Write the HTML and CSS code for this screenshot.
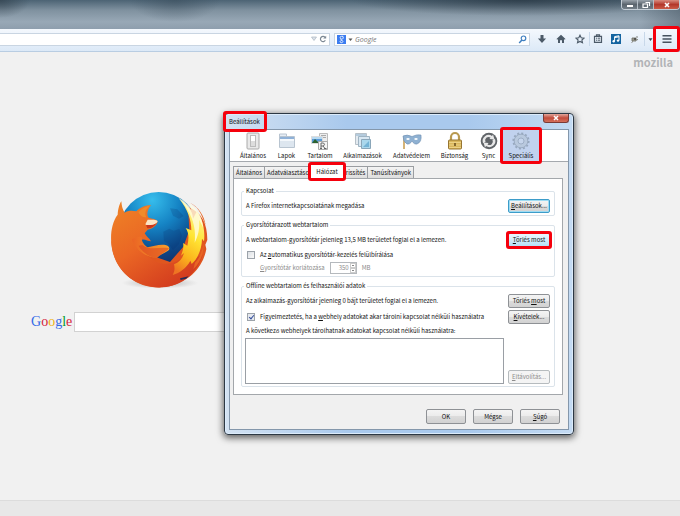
FILE: index.html
```html
<!DOCTYPE html>
<html lang="hu">
<head>
<meta charset="utf-8">
<title>Beállítások</title>
<link rel="stylesheet" href="styles.css">
</head>
<body>
<header class="glass">
  <div class="caption">
    <button class="cap" aria-label="Kis méret"><svg viewBox="0 0 10 8"><path d="M2 4h6v2H2z" fill="#fff"/></svg></button>
    <button class="cap" aria-label="Előző méret"><svg viewBox="0 0 10 8"><path d="M4.500 1.500h4v3.500M2 3h4.500v3.500H2z" fill="none" stroke="#fff" stroke-width="1.200"/></svg></button>
    <button class="cap cap-close" aria-label="Bezárás"><svg viewBox="0 0 10 8"><path d="M3 2l4 4M7 2L3 6" stroke="#fff" stroke-width="1.600"/></svg></button>
  </div>
</header>
<nav class="navbar">
  <div class="field url">
    <input aria-label="Cím" type="text">
    <svg class="i-drop" viewBox="0 0 8 8"><path d="M1.500 2h5L4 5.500z" fill="#dde3ea" stroke="#a9b4c0" stroke-width=".7"/></svg>
    <svg class="i-reload" viewBox="0 0 8 8"><path d="M6 2.300A2.600 2.600 0 1 0 6.300 5.300" fill="none" stroke="#7c8894" stroke-width="1.200"/><path d="M4.200 3.600h3V.7z" fill="#7c8894"/></svg>
  </div>
  <div class="field search">
    <svg class="i-g" viewBox="0 0 9 9"><path d="M0 0h9v9H0z" fill="#3b7cf0"/><path d="M6.400 1.300H4.500a1.300 1.300 0 1 0 0 2.700 1.300 1.300 0 0 0 .9-2.500M4.200 4c-.8.600.2 1 1 1.400 1.200.700.800 2.300-.8 2.300s-2-1.900.3-2.300" fill="none" stroke="#fff" stroke-width=".8"/></svg>
    <svg class="i-caret" viewBox="0 0 5 5"><path d="M.500 1.500h4L2.500 4z" fill="#555"/></svg>
    <input type="text" aria-label="Keresés" placeholder="Google">
    <svg class="i-find" viewBox="0 0 9 9"><circle cx="5.500" cy="3.300" r="2.300" fill="none" stroke="#3f7fc0" stroke-width="1.200"/><path d="M3.900 5L1.200 7.900" stroke="#3f7fc0" stroke-width="1.500"/></svg>
  </div>
  <div class="tools">
    <button class="tool" aria-label="Letöltések"><svg viewBox="0 0 10 10"><path d="M3.500 1h3v3.500h2.600L5 9 .9 4.500h2.600z" fill="#4c5a68"/></svg></button>
    <button class="tool" aria-label="Kezdőlap"><svg viewBox="0 0 10 10"><path d="M5 .8L9.500 5l-.7.700L8 5v4H6V6.200H4V9H2V5l-.8.700L.500 5z" fill="#4c5a68"/></svg></button>
    <button class="tool" aria-label="Könyvjelző"><svg viewBox="0 0 10 10"><path d="M5 1.200l1.200 2.600 2.800.300-2.100 1.900.600 2.800L5 7.400 2.500 8.800l.600-2.800L1 4.100l2.800-.3z" fill="none" stroke="#4c5a68" stroke-width="1.100"/></svg></button>
    <button class="tool tool-list" aria-label="Könyvjelzők"><svg viewBox="0 0 10 10"><path d="M3.500 2V.800h3V2M1.500 2.300h7v6h-7z" fill="none" stroke="#4c5a68" stroke-width="1.200"/><path d="M3 4.200h1m.7 0h2.500M3 6.200h1m.7 0h2.500" stroke="#4c5a68"/></svg></button>
    <button class="tool" aria-label="Zene"><svg viewBox="0 0 10 10"><path d="M0 0h10v10H0z" fill="#1464a0"/><path d="M3.600 7.200V2.600L8 1.800v4.600M3.600 3.600L8 2.800" fill="none" stroke="#fff"/><circle cx="2.700" cy="7.300" r="1.200" fill="#fff"/><circle cx="7" cy="6.600" r="1.200" fill="#fff"/></svg></button>
    <button class="tool" aria-label="Bővítmény"><svg viewBox="0 0 10 10"><path d="M2 4h4v3H2zM6 3h2M3 7.500L1.500 8.500M6 6l2-.5" fill="#9a9a90" stroke="#77776e" stroke-width=".9"/><path d="M4 4.500h2v1H4z" fill="#222"/></svg></button>
    <button class="tool tool-more" aria-label="Továbbiak"><svg viewBox="0 0 5 5"><path d="M.500 1.200h4L2.500 4z" fill="#3c4650"/></svg></button>
    <button class="tool menu mark" aria-label="Menü"><svg viewBox="0 0 10 10"><path d="M.500 1.800h9M.500 5h9M.500 8.200h9" stroke="#46525f" stroke-width="1.600"/></svg></button>
  </div>
</nav>
<main class="page">
  <a class="mozilla" href="#">mozilla</a>
  <svg class="fox" viewBox="0 0 360 360" role="img" aria-label="Firefox">
    <defs>
      <radialGradient id="globe" cx=".42" cy=".1" r=".85"><stop offset="0" stop-color="#36bdec"/><stop offset=".4" stop-color="#1583c4"/><stop offset=".75" stop-color="#0c4a8c"/><stop offset="1" stop-color="#123068"/></radialGradient>
      <linearGradient id="fur" x1="0" y1="0" x2=".7" y2="1"><stop offset="0" stop-color="#ef8426"/><stop offset=".5" stop-color="#ea6624"/><stop offset="1" stop-color="#d23a1e"/></linearGradient>
      <linearGradient id="tail" x1=".6" y1="0" x2=".3" y2="1"><stop offset="0" stop-color="#fff7b0"/><stop offset=".45" stop-color="#ffe433"/><stop offset=".75" stop-color="#fbb41c"/><stop offset="1" stop-color="#ee7423"/></linearGradient>
      <linearGradient id="arm" x1="0" x2="1"><stop offset="0" stop-color="#ea6424"/><stop offset="1" stop-color="#f9a02b"/></linearGradient>
      <radialGradient id="shade"><stop offset="0" stop-color="#777" stop-opacity=".6"/><stop offset="1" stop-color="#999" stop-opacity="0"/></radialGradient>
    </defs>
    <ellipse cx="180" cy="309" rx="115" ry="17" fill="url(#shade)"/>
    <circle cx="176" cy="155" r="119" fill="url(#globe)"/>
    <path d="M190 155l18-9 13 6 17-5 8 20-10 26-17 17-13-18-14-9zM210 85l22 3 19 20-14 8-18-9z" fill="#092e67" opacity=".2"/>
    <path d="M264 80C306 98 322 130 322 180L316 194 319 207C310 260 268 305 208 319 110 338 38 270 34 184L210 246 250 200 268 150z" fill="#e0561f"/>
    <path d="M64 64C58 72 54 88 53 104 36 126 31 159 34 192 42 275 110 326 188 322 247 318 293 277 308 225L282 233 240 238C220 253 183 257 157 239 132 222 121 200 126 179 134 176 144 184 153 184 148 174 138 169 134 160L143 149C156 147 170 136 173 125 170 116 155 116 146 113 138 103 143 88 153 75 137 76 119 82 109 94 96 91 82 92 74 98 67 88 65 76 64 64z" fill="url(#fur)"/>
    <path d="M236 54C260 74 279 91 279 116L291 93C308 118 316 151 312 184L306 176C306 205 293 237 275 252L271 242C259 264 240 278 218 285 225 272 224 263 222 253 237 248 247 237 252 219L243 227C249 211 252 199 249 189L262 197C267 176 267 158 257 144L274 151C274 121 265 91 236 54z" fill="url(#tail)"/>
    <path d="M236 54C254 64 267 75 274 91L269 71C292 88 306 109 310 143L297 119C300 145 294 169 284 188 288 153 281 119 264 92 258 78 247 64 236 54z" fill="#fffce0" opacity=".8"/>
    <path d="M270 68C295 79 313 108 317 135L303 103C297 88 286 77 270 68zM311 190C312 220 301 247 280 268L285 248C299 234 307 214 311 190z" fill="#e86623"/>
    <path d="M96 178C105 172 116 168 126 171 123 182 131 195 143 202 161 199 181 191 199 196 207 198 212 207 204 212 194 218 181 224 170 234 148 233 119 218 109 201 102 194 97 187 96 178z" fill="url(#arm)"/>
    <path d="M127 195C151 214 180 199 207 205 203 213 187 219 171 234 151 234 125 215 116 197z" fill="#d94420" opacity=".55"/>
    <path d="M143 119C154 120 164 117 173 123 171 132 157 137 144 139L136 133z" fill="#fbe4c5"/>
    <path d="M138 135C150 136 163 135 170 129 163 140 152 146 142 145z" fill="#c9351e"/>
    <path d="M139 112C132 100 138 86 152 76 139 79 124 86 115 97 121 107 127 113 139 112z" fill="#f08b28"/>
    <path d="M240 295l26-6-8 7-16 4z" fill="#232c57"/>
  </svg>
  <form class="gform">
    <label class="google" for="q"><span class="b">G</span><span class="r">o</span><span class="y">o</span><span class="b">g</span><span class="g">l</span><span class="r">e</span></label>
    <input id="q" type="text">
  </form>
</main>
<footer class="pagefoot"></footer>

<section class="dialog" role="dialog" aria-labelledby="dt">
  <div class="titlebar">
    <h1 id="dt" class="mark">Beállítások</h1>
    <button class="dclose" aria-label="Bezárás"><svg viewBox="0 0 10 8"><path d="M3 2l4 4M7 2L3 6" stroke="#fff" stroke-width="1.500"/></svg></button>
  </div>
  <div class="client">
    <div class="cats">
      <button class="cat"><svg viewBox="0 0 20 20"><rect x="4" y="2" width="12" height="16" rx="1" fill="#e9e9e9" stroke="#aaa"/><rect x="7.500" y="4.500" width="5" height="11" fill="#fff" stroke="#bbb"/><path d="M8 10h4v5H8z" fill="#ddd"/></svg>Általános</button>
      <button class="cat"><svg viewBox="0 0 20 20"><path d="M2.500 6V3h7v3" fill="#e6edf5" stroke="#b8c4d0"/><path d="M2.500 5.500h15v11h-15z" fill="#dde6ef" stroke="#b8c4d0"/><path d="M3 6h14v2H3z" fill="#8fb1d8"/><path d="M3 8h14v2H3z" fill="#f3f7fb"/></svg>Lapok</button>
      <button class="cat"><svg viewBox="0 0 20 20"><path d="M9.500 2.500h8v9h-8z" fill="#eee" stroke="#bbb"/><path d="M11 4.500h5M11 6.500h5" stroke="#aaa"/><path d="M1.500 5.500h11v7h-11z" fill="#5a9bd8" stroke="#ddd"/><path d="M2 12l3-4 3 3 2-1 2 2z" fill="#2c6330"/><path d="M2 6h10v2H2z" fill="#b8daf2"/><path d="M8.500 10.500h9v8h-9z" fill="#f5f5f5" stroke="#aaa"/><path d="M10 17.500h2m2 0h2.500M11 17v-5h2.500q2 1 0 3H11m2 0l2 2.500" fill="none" stroke="#666"/></svg>Tartalom</button>
      <button class="cat"><svg viewBox="0 0 20 20"><path d="M2.500 2.500h11v11h-11z" fill="#e3eaf0" stroke="#b6c0c8"/><path d="M3 3h10v2H3z" fill="#b4cbdd"/><path d="M5.500 5.500h11v10h-11z" fill="#d8e7f2" stroke="#9fb4c3"/><path d="M8.500 8.500h9v9h-9z" fill="#aad7ec" stroke="#8aa6b9"/><path d="M10 16l6-6v6z" fill="#74b3d5"/></svg>Alkalmazások</button>
      <button class="cat"><svg viewBox="0 0 20 20"><path d="M2 5v13" stroke="#c69a4a" stroke-width="1.500"/><path d="M1 5Q5 3 10 5.500 15 3 19 4q1 7-4 9-3 1-5-3-2 4-5 3-4-2-4-8z" fill="#8fb1d2" stroke="#6f8fb2" stroke-width=".6"/><path d="M4 8q2-2 4 0-2 2-4 0zM12 8q2-2 4 0-2 2-4 0z" fill="#fff"/></svg>Adatvédelem</button>
      <button class="cat"><svg viewBox="0 0 20 20"><path d="M6 10V6a4 4 0 0 1 8 0v4" fill="none" stroke="#b99a50" stroke-width="2.200"/><rect x="3.500" y="9" width="13" height="9" rx="1" fill="#d9b65c" stroke="#967531"/><path d="M4 11.500h12M4 14h12M4 16.500h12" stroke="#f1d991" stroke-width=".8"/><path d="M9.200 12h1.600v3H9.200z" fill="#6d5221"/></svg>Biztonság</button>
      <button class="cat"><svg viewBox="0 0 20 20"><circle cx="10" cy="10" r="8.300" fill="#606468"/><path d="M4 12a6 6 0 0 1 9-7l1-1.500 1.500 5-5-.5 1-1.500a3.500 3.500 0 0 0-5 4.500zM16 8a6 6 0 0 1-9 7l-1 1.500-1.500-5 5 .5-1 1.500A3.500 3.500 0 0 0 13.500 9z" fill="#e8e8e8"/></svg>Sync</button>
      <button class="cat cat-on mark"><svg viewBox="0 0 20 20"><circle cx="10" cy="10" r="7.600" fill="none" stroke="#97a8be" stroke-width="2" stroke-dasharray="2 1.979"/><circle cx="10" cy="10" r="5" fill="none" stroke="#b9c9de" stroke-width="4"/><circle cx="10" cy="10" r="6.800" fill="none" stroke="#8fa1b8" stroke-width=".7"/><circle cx="10" cy="10" r="3" fill="#c6d5ec" stroke="#8fa1b8" stroke-width=".7"/></svg>Speciális</button>
    </div>
    <div class="tabs">
      <button class="tab">Általános</button><button class="tab">Adatválasztások</button><button class="tab tab-on mark">Hálózat</button><button class="tab">Frissítés</button><button class="tab">Tanúsítványok</button>
    </div>
    <div class="panel">
      <fieldset>
        <legend>Kapcsolat</legend>
        <div class="row"><p>A Firefox internetkapcsolatának megadása</p><button class="btn focus"><u>B</u>eállítások...</button></div>
      </fieldset>
      <fieldset>
        <legend>Gyorsítótárazott webtartalom</legend>
        <div class="row"><p>A webtartalom-gyorsítótár jelenleg 13,5 MB területet foglal el a lemezen.</p><button class="btn hot mark"><u>T</u>örlés most</button></div>
        <div class="check"><input type="checkbox" id="c1"><label for="c1">Az <u>a</u>utomatikus gyorsítótár-kezelés felülbírálása</label></div>
        <div class="limit"><label for="n"><u>G</u>yorsítótár korlátozása</label><span class="spin"><input id="n" type="text" value="350" disabled><span class="arrows"><i></i><i></i></span></span><span>MB</span></div>
      </fieldset>
      <fieldset>
        <legend>Offline webtartalom és felhasználói adatok</legend>
        <div class="row"><p>Az alkalmazás-gyorsítótár jelenleg 0 bájt területet foglal el a lemezen.</p><button class="btn">Törlés <u>m</u>ost</button></div>
        <div class="row row-2"><div class="check"><input type="checkbox" id="c2" checked><label for="c2">Figyelmeztetés, ha a <u>w</u>ebhely adatokat akar tárolni kapcsolat nélküli használatra</label></div><button class="btn"><u>K</u>ivételek...</button></div>
        <p class="listlabel">A következő webhelyek tárolhatnak adatokat kapcsolat nélküli használatra:</p>
        <div class="row row-list"><div class="list" role="listbox" aria-label="Webhelyek"></div><button class="btn" disabled><u>E</u>ltávolítás...</button></div>
      </fieldset>
    </div>
    <div class="actions"><button class="btn">OK</button><button class="btn">Mégse</button><button class="btn"><u>S</u>úgó</button></div>
  </div>
</section>
</body>
</html>
```
FILE: styles.css
```css
* { box-sizing: border-box; }
body {
  margin: 0;
  min-height: 100vh;
  display: flex;
  flex-direction: column;
  background: #f1f1f1;
  color: #111;
  font: 6px/10px "Noto Sans CJK JP", "Open Sans", sans-serif;
}
button, input { font: inherit; color: inherit; margin: 0; padding: 0; }
button { background: none; border: 0; white-space: nowrap; }
svg { display: block; flex: none; }
p, h1 { margin: 0; font: inherit; white-space: nowrap; }
u { text-underline-offset: 1px; }

/* red callout around an element */
.mark { position: relative; }
.mark::after {
  content: "";
  position: absolute;
  z-index: 2;
  inset: -3px;
  border: 3px solid #f5000c;
  border-radius: 3px;
  pointer-events: none;
}

.glass {
  height: 29px;
  display: flex;
  justify-content: flex-end;
  align-items: flex-start;
  background:
    radial-gradient(ellipse 30px 18px at 0 0, #2e3d49aa, transparent),
    radial-gradient(ellipse 45px 22px at 175px 0, #384b5a88, transparent),
    radial-gradient(ellipse 170px 16px at 520px 0, #202d38aa, transparent),
    linear-gradient(90deg, transparent 94%, #38465266),
    linear-gradient(#4c6374, #7f919f 35%, #98a8b6 75%, #8e9ead);
}
.caption {
  display: flex;
  height: 10px;
  border: 1px solid #c3ccd4;
  border-top: 0;
  border-radius: 0 0 4px 4px;
  overflow: hidden;
}
.cap { width: 16px; background: linear-gradient(#9aa3ab, #5b656e 50%, #737e87); border-right: 1px solid #b5bec6; }
.cap svg { width: 12px; height: 8px; margin: auto; }
.cap-close { width: 25px; border: 0; background: linear-gradient(#d98c7f, #b3382b 50%, #cb5c48); }

.navbar {
  display: flex;
  align-items: center;
  gap: 4px;
  height: 23px;
  padding-bottom: 2px;
  background: linear-gradient(#f4f8fd, #dce9f7);
  border-bottom: 1px solid #b9cde2;
}
.field {
  display: flex;
  align-items: center;
  height: 13px;
  background: #fff;
  border: 1px solid #c9d5e2;
}
.field input { border: 0; background: none; min-width: 0; flex: 1; outline: 0; height: 11px; }
.url { flex: 1; border-left: 0; padding-right: 2px; gap: 1px; }
.search { width: 196px; padding: 0 2px; gap: 2px; }
.search input { font-style: italic; font-size: 7px; font-family: "Open Sans", sans-serif; }
.search input::placeholder { color: #777; opacity: 1; }
.i-drop, .i-reload { width: 8px; height: 8px; }
.i-g, .i-find { width: 9px; height: 9px; }
.i-caret { width: 5px; height: 5px; }
.tools { display: flex; align-items: center; height: 20px; margin-left: -2px; }
.tool { width: 19px; height: 14px; display: grid; place-items: center; }
.tool svg { width: 10px; height: 10px; }
.tool-list, .tool-more { border-left: 1px solid #c8d8e9; }
.tool-list { width: 17px; }
.tool-more { width: 11px; }
.tool-more svg { width: 5px; height: 5px; }
.menu { width: 21px; height: 20px; margin: 0 3px 0 1px; }

.page { flex: 1; display: flex; flex-direction: column; align-items: flex-start; }
.mozilla { align-self: flex-end; margin: 2px 7px 0 0; color: #b1b4b7; font: bold 11px/16px "Noto Sans CJK JP", sans-serif; text-decoration: none; }
.fox { width: 120px; height: 120px; margin: 110px 0 0 100px; }
.gform { display: flex; align-items: center; gap: 4px; margin: 12px 0 0 31px; }
.google { width: 39px; font: 14px/20px "Liberation Serif", serif; }
.b { color: #3369e8; } .r { color: #d5233a; } .y { color: #eeb211; } .g { color: #009925; }
.gform input { width: 300px; height: 20px; border: 1px solid #d2d2d2; background: #fff; }
.pagefoot { height: 16px; background: #e8e8e8; border-top: 1px solid #dcdcdc; }

.dialog {
  position: absolute;
  left: 224px;
  top: 113px;
  width: 350px;
  padding: 0 4px 4px;
  border: 1px solid #2c3844;
  border-radius: 4px;
  background: linear-gradient(90deg, #d3e2f2, #a9c9ed 35%, #a9c9ed 70%, #c4dbf3);
  box-shadow: inset 0 0 0 1px #dcebfa, 0 2px 7px 1px #0009;
}
.titlebar { display: flex; justify-content: space-between; align-items: flex-start; height: 15px; }
.titlebar h1 { line-height: 15px; margin-left: -3px; padding: 0 3px; height: 15px; width: 38px; }
.dclose { width: 26px; height: 9px; border: 1px solid #7b3a35; border-top: 0; border-radius: 0 0 3px 3px; background: linear-gradient(#e3a79c, #c24b3b 50%, #d4705c); }
.dclose svg { width: 10px; height: 8px; margin: auto; }
.client { background: #f0f0f0; border: 1px solid #8497ab; }
.cats { display: grid; grid-template-columns: 34px 33px 34px 51px 47px 39px 29px 36px; padding-left: 6px; background: #fff; border-bottom: 1px solid #a5a9ae; }
.cat { display: flex; flex-direction: column; align-items: center; height: 31px; padding-top: 1px; }
.cat svg { width: 20px; height: 20px; }
.cat-on { background: #c1d2ee; }
.tabs { display: flex; align-items: flex-end; height: 16px; padding-left: 3px; }
.tab { height: 12px; padding: 0 2px; background: linear-gradient(#f4f4f4, #dedede); border: 1px solid #9a9da1; border-bottom: 0; margin-right: -1px; }
.tab-on { height: 14px; padding: 0 5px; margin: 0 -4px; z-index: 1; background: #fff; }
.panel { display: grid; gap: 4px; margin: 0 5px 0 3px; padding: 7px; background: #fff; border: 1px solid #a3a7ab; }
fieldset { margin: 0; min-width: 0; padding: 3px 4px 2px; border: 1px solid #dbe3ea; border-radius: 2px; }
legend { padding: 0 2px; margin-left: -2px; }
.row { display: flex; justify-content: space-between; align-items: center; gap: 4px; }
.row-2 { margin-top: 2px; }
.row-list { align-items: flex-end; }
.btn { min-width: 42px; height: 14px; line-height: 12px; border: 1px solid #8e9195; border-radius: 2px; background: linear-gradient(#f4f4f4, #ebebeb 50%, #dcdcdc 50%, #d2d2d2); }
.btn:disabled { color: #8d8d8d; border-color: #b6bbbe; background: #f4f4f4; }
.focus { border-color: #3c9cc9; box-shadow: inset 0 0 0 1px #9fdcf3; }
.hot { border-color: #69b1d6; background: linear-gradient(#eaf6fd, #d3ecf9 50%, #b5e0f6); }
.check { display: flex; align-items: center; gap: 5px; margin: 3px 0 2px 1px; height: 10px; white-space: nowrap; }
.row-2 .check { margin: 0 0 0 1px; }
.check input {
  appearance: none;
  width: 8px;
  height: 8px;
  border: 1px solid #9ca3aa;
  background: linear-gradient(135deg, #dce0e4, #fafafa);
}
.check input:checked { background: #e6e9ef; position: relative; }
.check input:checked::after { content: ""; position: absolute; left: 2px; top: 0; width: 2px; height: 4px; border: solid #354f9c; border-width: 0 1px 1px 0; transform: rotate(40deg); }
.limit { display: flex; align-items: center; gap: 5px; padding-left: 14px; color: #8b8b8b; }
.spin { display: flex; width: 27px; height: 12px; border: 1px solid #b5b9bd; background: #fff; }
.spin input { border: 0; width: 18px; text-align: right; background: none; }
.arrows { width: 6px; margin-left: 1px; display: grid; gap: 0; align-content: center; }
.arrows i { height: 5px; border: 1px solid #ccc; background: linear-gradient(#888, #888) center / 2px 1px no-repeat; }
.listlabel { margin: 2px 0; }
.list { flex: 1; height: 46px; border: 1px solid #9a9fa5; background: #fff; margin-left: -1px; }
.actions { display: flex; justify-content: flex-end; gap: 7px; padding: 14px 8px 5px; }
.actions .btn { min-width: 40px; height: 15px; }
```
